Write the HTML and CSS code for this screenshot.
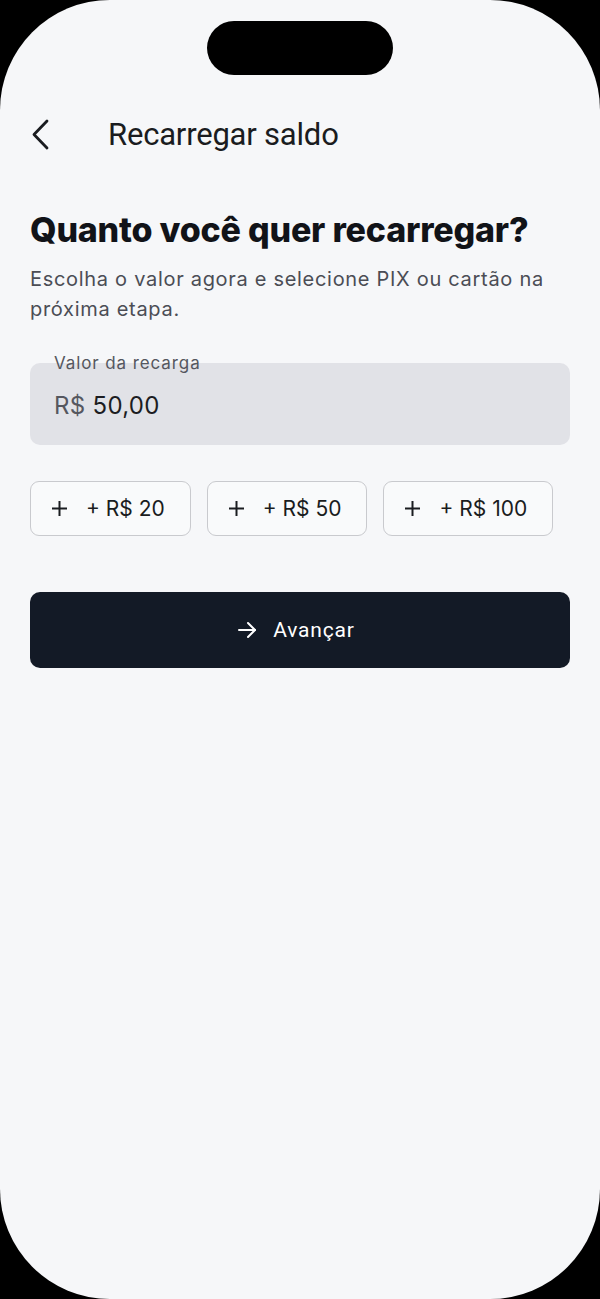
FILE: index.html
```html
<!DOCTYPE html>
<html lang="pt-BR">
<head>
<meta charset="UTF-8" />
<meta name="viewport" content="width=device-width, initial-scale=1" />
<title>Recarregar saldo</title>
<link rel="stylesheet" href="styles.css">
</head>
<body>

<div class="phone">
  <div class="island"></div>

  <header class="topbar">
    <button class="back" aria-label="Voltar">
      <svg width="24" height="32" viewBox="0 0 24 32" fill="none" stroke="#1a1c20" stroke-width="2.8" stroke-linecap="round" stroke-linejoin="round">
        <path d="M17 3 L4 16.5 L17 30" />
      </svg>
    </button>
    <h1>Recarregar saldo</h1>
  </header>

  <main>
    <h2>Quanto você quer recarregar?</h2>
    <p class="lead">Escolha o valor agora e selecione PIX ou cartão na próxima etapa.</p>

    <div class="field">
      <label>Valor da recarga</label>
      <div class="value"><span class="prefix">R$</span> 50,00</div>
    </div>

    <div class="chips">
      <button class="chip"><svg class="plus" width="17" height="17" viewBox="0 0 17 17" stroke="#1a1c20" stroke-width="2"><path d="M8.5 1 V16 M1 8.5 H16" /></svg>+ R$ 20</button>
      <button class="chip"><svg class="plus" width="17" height="17" viewBox="0 0 17 17" stroke="#1a1c20" stroke-width="2"><path d="M8.5 1 V16 M1 8.5 H16" /></svg>+ R$ 50</button>
      <button class="chip"><svg class="plus" width="17" height="17" viewBox="0 0 17 17" stroke="#1a1c20" stroke-width="2"><path d="M8.5 1 V16 M1 8.5 H16" /></svg>+ R$ 100</button>
    </div>

    <button class="primary">
      <svg width="22" height="22" viewBox="0 0 22 22" fill="none" stroke="#fff" stroke-width="2" stroke-linecap="round" stroke-linejoin="round">
        <path d="M3 11 H19" />
        <path d="M12 4 L19 11 L12 18" />
      </svg>
      Avançar
    </button>
  </main>
</div>

</body>
</html>
```

FILE: styles.css
```css
* { box-sizing: border-box; }
body { margin: 0; background: #000; font-family: Inter, "Noto Sans", sans-serif; }

.phone {
  position: relative; width: 600px; height: 1299px; overflow: hidden;
  background: #f6f7f9; border-radius: 110px;
}
.island {
  position: absolute; top: 21px; left: 207px; width: 186px; height: 54px;
  background: #000; border-radius: 27px;
}

.topbar {
  display: flex; align-items: center; height: 50px; margin-top: 109px;
  padding: 0 30px;
}
.back {
  display: flex; background: none; border: none; padding: 0; width: 24px; height: 32px;
  cursor: pointer;
}
.topbar h1 {
  margin: 0 0 0 54px; font-family: Roboto, sans-serif; font-weight: 400;
  font-size: 31px; color: #1a1c20; letter-spacing: -0.2px;
}

main { padding: 0 30px; }
h2 {
  margin: 50px 0 0; font-size: 34px; font-weight: 800; color: #111318;
  letter-spacing: -0.2px;
}
.lead {
  margin: 14px 0 0; font-size: 20px; line-height: 30px; color: #4b4d55;
  letter-spacing: 0.7px;
}

.field {
  position: relative; margin-top: 39px; height: 82px; background: #e1e2e7;
  border-radius: 10px; padding: 0 24px;
}
.field label {
  position: absolute; top: -10px; left: 24px; font-size: 17px; color: #55575f;
  letter-spacing: 0.9px;
}
.value { padding-top: 28px; font-size: 24px; color: #1c1d22; letter-spacing: 0.3px; }
.prefix { color: #55575f; }

.chips { display: flex; gap: 16px; margin-top: 36px; }
.chip {
  display: flex; align-items: center; gap: 18px; height: 55px; padding: 0 25px 0 20px;
  background: #f9fafb; border: 1px solid #c9cace; border-radius: 9px;
  font-family: Inter, sans-serif; font-size: 21px; color: #1a1c20; cursor: pointer;
}
.plus { flex: none; }

.primary {
  display: flex; align-items: center; justify-content: center; gap: 15px;
  width: 100%; height: 76px; margin-top: 56px; padding: 0 9px 0 0;
  border: none; border-radius: 10px;
  background: #131a26; color: #fff; font-family: Roboto, sans-serif; font-size: 21px;
  letter-spacing: 0.8px; cursor: pointer;
}
```
